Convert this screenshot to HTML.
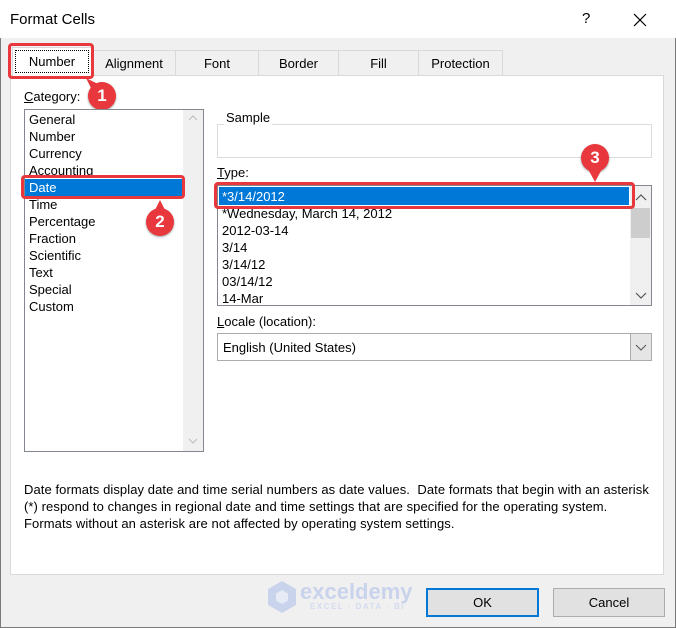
<!DOCTYPE html>
<html><head><meta charset="utf-8"><style>
*{box-sizing:border-box;margin:0;padding:0}
body{width:676px;height:628px;background:#f0f0f0;font-family:"Liberation Sans",sans-serif;font-size:12px;color:#000;position:relative;overflow:hidden}
.a{position:absolute}
.title{left:0;top:0;width:676px;height:38px;background:#fff}
.tab{top:50px;height:26px;border:1px solid #d9d9d9;border-bottom:none;background:#f0f0f0;text-align:center;line-height:25px;font-size:13px}
.panel{left:10px;top:75px;width:654px;height:500px;background:#fff;border:1px solid #d9d9d9}
.list{border:1px solid #828790;background:#fff}
.it{position:absolute;left:4px;height:17px;line-height:17px;white-space:nowrap;font-size:13px}
.red{border:3px solid #e8383d;border-radius:4px}
.badge{width:28px;height:28px;border-radius:50%;background:#e8383d;color:#fff;font-weight:bold;font-size:17px;text-align:center;line-height:28px;box-shadow:0 1px 2px rgba(0,0,0,.4)}
.sb{background:#f0f0f0}
.btn{top:588px;height:29px;background:#e1e1e1;border:1px solid #adadad;text-align:center;line-height:27px;font-size:13px}
</style></head><body>
<div class="a" style="left:0;top:0;width:676px;height:628px;border:1px solid #7a7a7a;border-top:none"></div>
<div class="a title"></div>
<div class="a" style="left:10px;top:11px;font-size:15px">Format Cells</div>
<div class="a" style="left:582px;top:10px;font-size:15px">?</div>
<svg class="a" style="left:633px;top:13px" width="14" height="14"><path d="M1 1L13 13M13 1L1 13" stroke="#000" stroke-width="1.2"/></svg>

<div class="a tab" style="left:92px;width:84px">Alignment</div>
<div class="a tab" style="left:175px;width:84px">Font</div>
<div class="a tab" style="left:258px;width:81px">Border</div>
<div class="a tab" style="left:338px;width:81px">Fill</div>
<div class="a tab" style="left:418px;width:85px">Protection</div>
<div class="a panel"></div>
<div class="a" style="left:12px;top:47px;width:80px;height:30px;background:#fff;border:1px solid #d9d9d9;border-bottom:none"></div>
<div class="a" style="left:15px;top:50px;width:74px;height:23px;border:1px dotted #000;text-align:center;line-height:22px;font-size:13px">Number</div>
<div class="a red" style="left:8px;top:43px;width:86px;height:36px"></div>
<svg class="a" style="left:84px;top:76px" width="16" height="16"><path d="M2 2L14 8L8 14Z" fill="#e8383d"/></svg>
<div class="a badge" style="left:88px;top:82px">1</div>

<div class="a" style="left:24px;top:89px;font-size:13px"><u>C</u>ategory:</div>
<div class="a list" style="left:24px;top:109px;width:180px;height:343px">
 <div class="a sb" style="left:158px;top:0;width:20px;height:341px"></div>
 <svg class="a" style="left:163px;top:5px" width="10" height="6"><path d="M1 5L5 1L9 5" stroke="#bbb" fill="none"/></svg>
 <svg class="a" style="left:163px;top:328px" width="10" height="6"><path d="M1 1L5 5L9 1" stroke="#bbb" fill="none"/></svg>
 <div class="a" style="left:0;top:69px;width:157px;height:17px;background:#0078d7"></div>
 <div class="it" style="top:1px">General</div>
 <div class="it" style="top:18px">Number</div>
 <div class="it" style="top:35px">Currency</div>
 <div class="it" style="top:52px">Accounting</div>
 <div class="it" style="top:69px;color:#fff">Date</div>
 <div class="it" style="top:86px">Time</div>
 <div class="it" style="top:103px">Percentage</div>
 <div class="it" style="top:120px">Fraction</div>
 <div class="it" style="top:137px">Scientific</div>
 <div class="it" style="top:154px">Text</div>
 <div class="it" style="top:171px">Special</div>
 <div class="it" style="top:188px">Custom</div>
</div>
<div class="a red" style="left:21px;top:175px;width:164px;height:24px"></div>
<svg class="a" style="left:153px;top:199px" width="14" height="14"><path d="M7 1L13 13L1 13Z" fill="#e8383d"/></svg>
<div class="a badge" style="left:146px;top:208px">2</div>

<div class="a" style="left:217px;top:124px;width:435px;height:34px;border:1px solid #dcdcdc"></div>
<div class="a" style="left:224px;top:110px;background:#fff;padding:0 2px;font-size:13px">Sample</div>

<div class="a" style="left:217px;top:165px;font-size:13px"><u>T</u>ype:</div>
<div class="a list" style="left:217px;top:185px;width:435px;height:121px">
 <div class="a sb" style="left:412px;top:0;width:21px;height:119px"></div>
 <div class="a" style="left:413px;top:22px;width:19px;height:30px;background:#cdcdcd"></div>
 <svg class="a" style="left:417px;top:8px" width="12" height="7"><path d="M1 6L6 1L11 6" stroke="#555" fill="none" stroke-width="1.2"/></svg>
 <svg class="a" style="left:417px;top:106px" width="12" height="7"><path d="M1 1L6 6L11 1" stroke="#555" fill="none" stroke-width="1.2"/></svg>
 <div class="a" style="left:1px;top:1px;width:410px;height:18px;background:#0078d7"></div>
 <div class="it" style="top:2px;color:#fff">*3/14/2012</div>
 <div class="it" style="top:19px">*Wednesday, March 14, 2012</div>
 <div class="it" style="top:36px">2012-03-14</div>
 <div class="it" style="top:53px">3/14</div>
 <div class="it" style="top:70px">3/14/12</div>
 <div class="it" style="top:87px">03/14/12</div>
 <div class="it" style="top:104px">14-Mar</div>
</div>
<div class="a red" style="left:214px;top:182px;width:421px;height:27px"></div>
<div class="a badge" style="left:581px;top:144px">3</div>
<svg class="a" style="left:588px;top:169px" width="14" height="14"><path d="M0 0L14 0L7 13Z" fill="#e8383d"/></svg>

<div class="a" style="left:217px;top:314px;font-size:13px"><u>L</u>ocale (location):</div>
<div class="a" style="left:217px;top:333px;width:435px;height:28px;border:1px solid #acacac;background:#fff">
 <div class="a" style="left:5px;top:6px;font-size:13px">English (United States)</div>
 <div class="a" style="left:412px;top:0;width:21px;height:26px;background:#e5e5e5;border-left:1px solid #acacac"></div>
 <svg class="a" style="left:417px;top:10px" width="12" height="7"><path d="M1 1L6 6L11 1" stroke="#555" fill="none"/></svg>
</div>

<div class="a" style="left:24px;top:481px;width:650px;line-height:17px;font-size:13px;letter-spacing:0.08px;white-space:nowrap">Date formats display date and time serial numbers as date values.&nbsp; Date formats that begin with an asterisk<br>(*) respond to changes in regional date and time settings that are specified for the operating system.<br>Formats without an asterisk are not affected by operating system settings.</div>

<svg class="a" style="left:266px;top:580px" width="32" height="34"><path d="M16 1L30 9V25L16 33L2 25V9Z" fill="#c9d3ec"/><path d="M16 10L22 13.5V20.5L16 24L10 20.5V13.5Z" fill="#e6ebf6"/></svg>
<div class="a" style="left:300px;top:579px;font-size:22px;font-weight:bold;color:#c9d3ec">exceldemy</div>
<div class="a" style="left:310px;top:602px;font-size:8px;font-weight:bold;color:#d3dbee;letter-spacing:1.5px">EXCEL · DATA · BI</div>

<div class="a btn" style="left:426px;width:113px;border:2px solid #0078d7;line-height:25px">OK</div>
<div class="a btn" style="left:553px;width:112px">Cancel</div>
</body></html>
